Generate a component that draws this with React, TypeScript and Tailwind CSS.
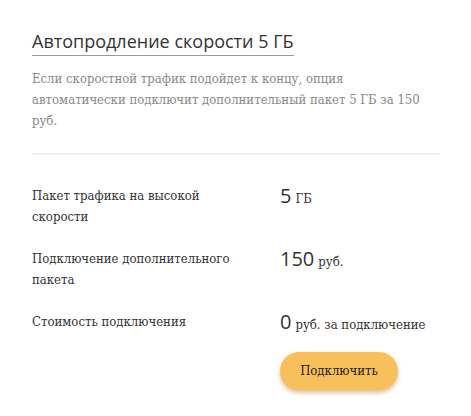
import type { FC } from "react";

interface RowProps {
  label: string;
  value: string;
  unit: string;
}

const Row: FC<RowProps> = ({ label, value, unit }) => (
  <div className="flex">
    <div className="w-[248px]">
      <p className="max-w-[214px] text-[13px] leading-[21px] text-[#333]">
        {label}
      </p>
    </div>
    <p className="flex items-baseline gap-[4px] text-[#333]">
      <span className="font-['Open_Sans',sans-serif] text-[20px] leading-[21px]">
        {value}
      </span>
      <span className="text-[13px] leading-[21px]">{unit}</span>
    </p>
  </div>
);

export default function App() {
  return (
    <div className="h-[416px] w-[471px] bg-white px-[32px] pt-[28px] font-['DejaVu_Serif_Condensed','DejaVu_Serif',serif]">
      <h1 className="inline-block border-b border-[#999] pb-[1px] font-['Open_Sans',sans-serif] text-[18px] leading-[26px] text-[#333]">
        Автопродление скорости 5 ГБ
      </h1>
      <p className="mt-[12px] w-[400px] text-[13px] leading-[21px] text-[#888]">
        Если скоростной трафик подойдет к концу, опция автоматически подключит
        дополнительный пакет 5 ГБ за 150 руб.
      </p>
      <div className="mt-[22px] h-[2px] w-[408px] bg-[#f2f2f2]" />
      <div className="mt-[30px] flex flex-col gap-[21px]">
        <Row label="Пакет трафика на высокой скорости" value="5" unit="ГБ" />
        <Row
          label="Подключение дополнительного пакета"
          value="150"
          unit="руб."
        />
        <Row
          label="Стоимость подключения"
          value="0"
          unit="руб. за подключение"
        />
      </div>
      <div className="mt-[17px] pl-[248px]">
        <button className="h-[38px] w-[118px] rounded-full bg-[#f7c05a] text-[13px] text-[#222] shadow-[0_3px_4px_rgba(180,120,30,0.45)]">
          Подключить
        </button>
      </div>
    </div>
  );
}
